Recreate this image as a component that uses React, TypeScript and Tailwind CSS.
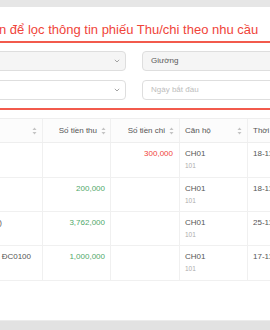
import React from 'react'

interface Row {
  lead: string
  leadPad: string
  thu: string
  chi: string
  date: string
  height: string
}

const rows: Row[] = [
  { lead: '', leadPad: 'pr-[11px]', thu: '', chi: '300,000', date: '18-11-2023', height: 'h-[35px]' },
  { lead: '', leadPad: 'pr-[11px]', thu: '200,000', chi: '', date: '18-11-2023', height: 'h-[34px]' },
  { lead: ')', leadPad: 'pr-[40px]', thu: '3,762,000', chi: '', date: '25-11-2023', height: 'h-[34px]' },
  { lead: ': ĐC0100', leadPad: 'pr-[11px]', thu: '1,000,000', chi: '', date: '17-11-2023', height: 'h-[35px]' },
]

const SortIcon = () => (
  <svg width="5" height="8" viewBox="0 0 5 8" className="shrink-0">
    <path d="M2.5 0.5 L4.5 3 L0.5 3 Z" fill="#c4c4c4" />
    <path d="M2.5 7.5 L4.5 5 L0.5 5 Z" fill="#c4c4c4" />
  </svg>
)

const Chevron = () => (
  <svg width="6" height="4" viewBox="0 0 6 4" className="shrink-0">
    <path d="M0.8 0.8 L3 3 L5.2 0.8" fill="none" stroke="#9a9a9a" strokeWidth="0.9" />
  </svg>
)

const App: React.FC = () => {
  return (
    <div
      className="w-[270px] h-[330px] overflow-hidden bg-white flex flex-col"
      style={{ fontFamily: '"Liberation Sans", Arial, sans-serif' }}
    >
      <div className="h-[7px] shrink-0 bg-[#e6e6e6]" />

      {/* annotation */}
      <div className="h-[34px] shrink-0 pt-[15px]">
        <p className="ml-[-1px] whitespace-nowrap text-[13px] leading-[16px] text-[#f0443a]">
          n để lọc thông tin phiếu Thu/chi theo nhu cầu
        </p>
      </div>

      {/* filter form */}
      <div className="shrink-0 border-y-2 border-[#f25a4c] pt-[8px] pb-[8px]">
        <div className="ml-[-100px] flex flex-col gap-[9px]">
          <div className="flex gap-4">
            <div className="w-[226px] h-[20px] shrink-0 rounded-[4px] border border-[#dedede] bg-[#f5f5f5] flex items-center justify-end pr-[5px]">
              <Chevron />
            </div>
            <div className="w-[240px] h-[20px] shrink-0 rounded-[4px] border border-[#dedede] bg-[#f5f5f5] flex items-center pl-[8px] text-[8px] text-[#595959]">
              Giường
            </div>
          </div>
          <div className="flex gap-4">
            <div className="w-[226px] h-[20px] shrink-0 rounded-[4px] border border-[#dedede] bg-white flex items-center justify-end pr-[5px]">
              <Chevron />
            </div>
            <div className="w-[240px] h-[20px] shrink-0 rounded-[4px] border border-[#dedede] bg-white flex items-center pl-[8px] text-[8px] text-[#bdbdbd]">
              Ngày bắt đầu
            </div>
          </div>
        </div>
      </div>

      {/* table */}
      <div className="mt-[8px] ml-[-60px] w-[420px] shrink-0 border-t border-[#eeeeee] text-[8px] leading-[12px]">
        <div className="flex h-[24px] border-b border-[#eeeeee] bg-[#fcfcfc] text-[#555555]">
          <div className="w-[103px] border-r border-[#f0f0f0] flex items-center justify-end pr-[5px]">
            <SortIcon />
          </div>
          <div className="w-[68px] border-r border-[#f0f0f0] flex items-center justify-end gap-[4px] pr-[4px]">
            <span>Số tiền thu</span>
            <SortIcon />
          </div>
          <div className="w-[69px] border-r border-[#f0f0f0] flex items-center justify-end gap-[4px] pr-[5px]">
            <span>Số tiền chi</span>
            <SortIcon />
          </div>
          <div className="w-[68px] border-r border-[#f0f0f0] flex items-center justify-between pl-[5px] pr-[5px]">
            <span>Căn hộ</span>
            <SortIcon />
          </div>
          <div className="flex-1 flex items-center pl-[5px]">Thời gian</div>
        </div>

        {rows.map((r, i) => (
          <div key={i} className={`flex ${r.height} border-b border-[#f0f0f0] text-[#555555]`}>
            <div className={`w-[103px] border-r border-[#f0f0f0] pt-[5px] flex justify-end whitespace-nowrap ${r.leadPad}`}>
              {r.lead}
            </div>
            <div className="w-[68px] border-r border-[#f0f0f0] pt-[5px] pr-[5px] text-right text-[#4fa96a]">
              {r.thu}
            </div>
            <div className="w-[69px] border-r border-[#f0f0f0] pt-[5px] pr-[6px] text-right text-[#f0443a]">
              {r.chi}
            </div>
            <div className="w-[68px] border-r border-[#f0f0f0] pt-[5px] pl-[5px]">
              <div>CH01</div>
              <div className="mt-[1px] text-[6.5px] leading-[10px] text-[#acacac]">101</div>
            </div>
            <div className="flex-1 pt-[5px] pl-[5px] whitespace-nowrap">{r.date}</div>
          </div>
        ))}
      </div>

      <div className="flex-1" />
      <div className="h-[10px] shrink-0 border-t border-[#ececec] bg-[#e2e2e2]" />
    </div>
  )
}

export default App
